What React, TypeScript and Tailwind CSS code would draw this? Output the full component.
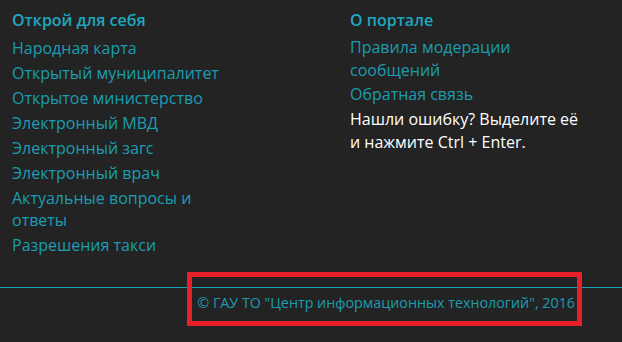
import React from "react";

const leftLinks = [
  "Народная карта",
  "Открытый муниципалитет",
  "Открытое министерство",
  "Электронный МВД",
  "Электронный загс",
  "Электронный врач",
  "Актуальные вопросы и ответы",
  "Разрешения такси",
];

const rightLinks = ["Правила модерации сообщений", "Обратная связь"];

export default function App() {
  return (
    <div className="w-[622px] h-[342px] bg-[#232323] font-['Open_Sans',sans-serif] relative overflow-hidden">
      <div className="flex pt-[9px] h-[287px]">
        {/* left column */}
        <div className="w-[350px] pl-3">
          <h4 className="text-[16px] font-semibold text-[#1fa7bf] leading-[22px] mb-[6px]">
            Открой для себя
          </h4>
          <ul className="flex flex-col gap-[3px]">
            {leftLinks.map((l) => (
              <li key={l} className="w-[220px] text-[16px] leading-[22px] text-[#1a9db1]">
                {l}
              </li>
            ))}
          </ul>
        </div>
        {/* right column */}
        <div className="w-[240px]">
          <h4 className="text-[16px] font-semibold text-[#1fa7bf] leading-[22px] mb-[5px]">
            О портале
          </h4>
          <ul className="flex flex-col gap-[1px]">
            {rightLinks.map((l) => (
              <li key={l} className="w-[180px] text-[16px] leading-[23px] text-[#1a9db1]">
                {l}
              </li>
            ))}
          </ul>
          <p className="text-[16px] leading-[23px] text-white mt-[2px] w-[235px]">
            Нашли ошибку? Выделите её и нажмите Ctrl + Enter.
          </p>
        </div>
      </div>
      <div className="h-px bg-[#1aa3b6]" />
      <div className="flex justify-end pr-[47px] pt-[4px]">
        <p className="text-[14.3px] leading-[22px] text-[#1a9db1]">
          © ГАУ ТО "Центр информационных технологий", 2016
        </p>
      </div>
      {/* annotation box */}
      <div className="absolute left-[187px] top-[272px] w-[395px] h-[54px] border-[5px] border-[#e8202a]" />
    </div>
  );
}
